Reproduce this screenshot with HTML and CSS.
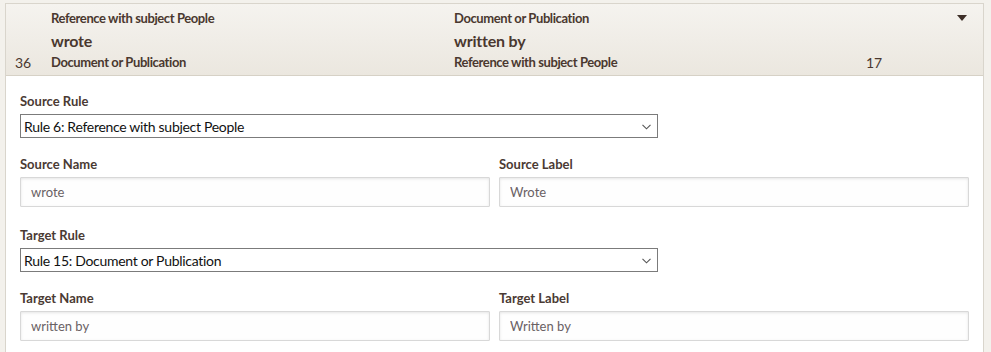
FILE: index.html
```html
<!DOCTYPE html>
<html lang="en">
<head>
  <meta charset="UTF-8">
  <meta name="viewport" content="width=device-width, initial-scale=1.0">
  <title>Relationship Rule</title>
  <link rel="stylesheet" href="styles.css">
</head>
<body>

<div class="panel">
  <div class="panel-head">
    <span class="cell"></span>
    <span class="cell">Reference with subject People</span>
    <span class="cell">Document or Publication</span>
    <span class="cell"></span>
    <span class="cell caret-cell">
      <svg width="10" height="6" viewBox="0 0 10 6"><path d="M0 0 H10 L5 6 Z" fill="#3e2f28"/></svg>
    </span>

    <span class="cell"></span>
    <span class="cell name">wrote</span>
    <span class="cell name">written by</span>
    <span class="cell"></span>
    <span class="cell"></span>

    <span class="cell num">36</span>
    <span class="cell">Document or Publication</span>
    <span class="cell">Reference with subject People</span>
    <span class="cell num">17</span>
    <span class="cell"></span>
  </div>

  <div class="panel-body">
    <div class="field">
      <label>Source Rule</label>
      <div class="select-wrap">
        <select>
          <option>Rule 6: Reference with subject People</option>
        </select>
        <svg class="chevron" width="9" height="6" viewBox="0 0 9 6"><path d="M0.5 0.8 L4.5 4.8 L8.5 0.8" fill="none" stroke="#555" stroke-width="1.1"/></svg>
      </div>
    </div>

    <div class="pair">
      <div class="field">
        <label>Source Name</label>
        <input type="text" value="wrote">
      </div>
      <div class="field">
        <label>Source Label</label>
        <input type="text" value="Wrote">
      </div>
    </div>

    <div class="field">
      <label>Target Rule</label>
      <div class="select-wrap">
        <select>
          <option>Rule 15: Document or Publication</option>
        </select>
        <svg class="chevron" width="9" height="6" viewBox="0 0 9 6"><path d="M0.5 0.8 L4.5 4.8 L8.5 0.8" fill="none" stroke="#555" stroke-width="1.1"/></svg>
      </div>
    </div>

    <div class="pair">
      <div class="field">
        <label>Target Name</label>
        <input type="text" value="written by">
      </div>
      <div class="field">
        <label>Target Label</label>
        <input type="text" value="Written by">
      </div>
    </div>
  </div>
</div>

</body>
</html>
```

FILE: styles.css
```css
body {
  margin: 0;
  padding: 3px 7px 0 5px;
  background-color: #f3f1ec;
  font-family: Lato, "Open Sans", sans-serif;
  color: #4a382f;
}
.panel {
  border: 1px solid #d9d5cc;
  border-bottom: none;
  background-color: white;
  height: 360px;
}
.panel-head {
  display: grid;
  grid-template-columns: 45px 403px 403px 1fr 26px;
  grid-auto-rows: 22px;
  padding: 3px 0 2px 0;
  background: linear-gradient(#f5f3ef, #ebe7df);
  border-bottom: 1px solid #d6d1c6;
  font-size: 13px;
  font-weight: 700;
  letter-spacing: -0.4px;
}
.cell {
  display: flex;
  align-items: center;
  white-space: nowrap;
}
.cell.name {
  font-size: 16px;
  letter-spacing: -0.2px;
}
.cell.num {
  padding-left: 9px;
  font-weight: 400;
  font-size: 14px;
  letter-spacing: 0;
}
.caret-cell {
  align-items: flex-start;
  padding-top: 8px;
}
.panel-body {
  padding: 17px 14px 0 14px;
}
.field label {
  display: block;
  font-size: 13px;
  font-weight: 700;
  line-height: 16px;
  margin-bottom: 5px;
  color: #4a3a33;
}
.select-wrap {
  position: relative;
  width: 638px;
  margin-bottom: 18px;
}
select {
  appearance: none;
  width: 100%;
  height: 24px;
  padding: 0 3px;
  border: 1px solid #7b7b7b;
  border-radius: 0;
  background-color: white;
  font-family: Lato, "Open Sans", sans-serif;
  font-size: 14px;
  letter-spacing: -0.3px;
  color: #111;
}
.chevron {
  position: absolute;
  right: 7px;
  top: 10px;
}
.pair {
  display: grid;
  grid-template-columns: 1fr 1fr;
  gap: 9px;
  margin-bottom: 20px;
}
input {
  box-sizing: border-box;
  width: 100%;
  height: 30px;
  padding: 0 10px;
  border: 1px solid #d8d8d8;
  border-radius: 1px;
  background-color: #fefefe;
  box-shadow: inset 0 1px 3px rgba(0, 0, 0, 0.1);
  font-family: Lato, "Open Sans", sans-serif;
  font-size: 13px;
  color: #6a6164;
}
```
